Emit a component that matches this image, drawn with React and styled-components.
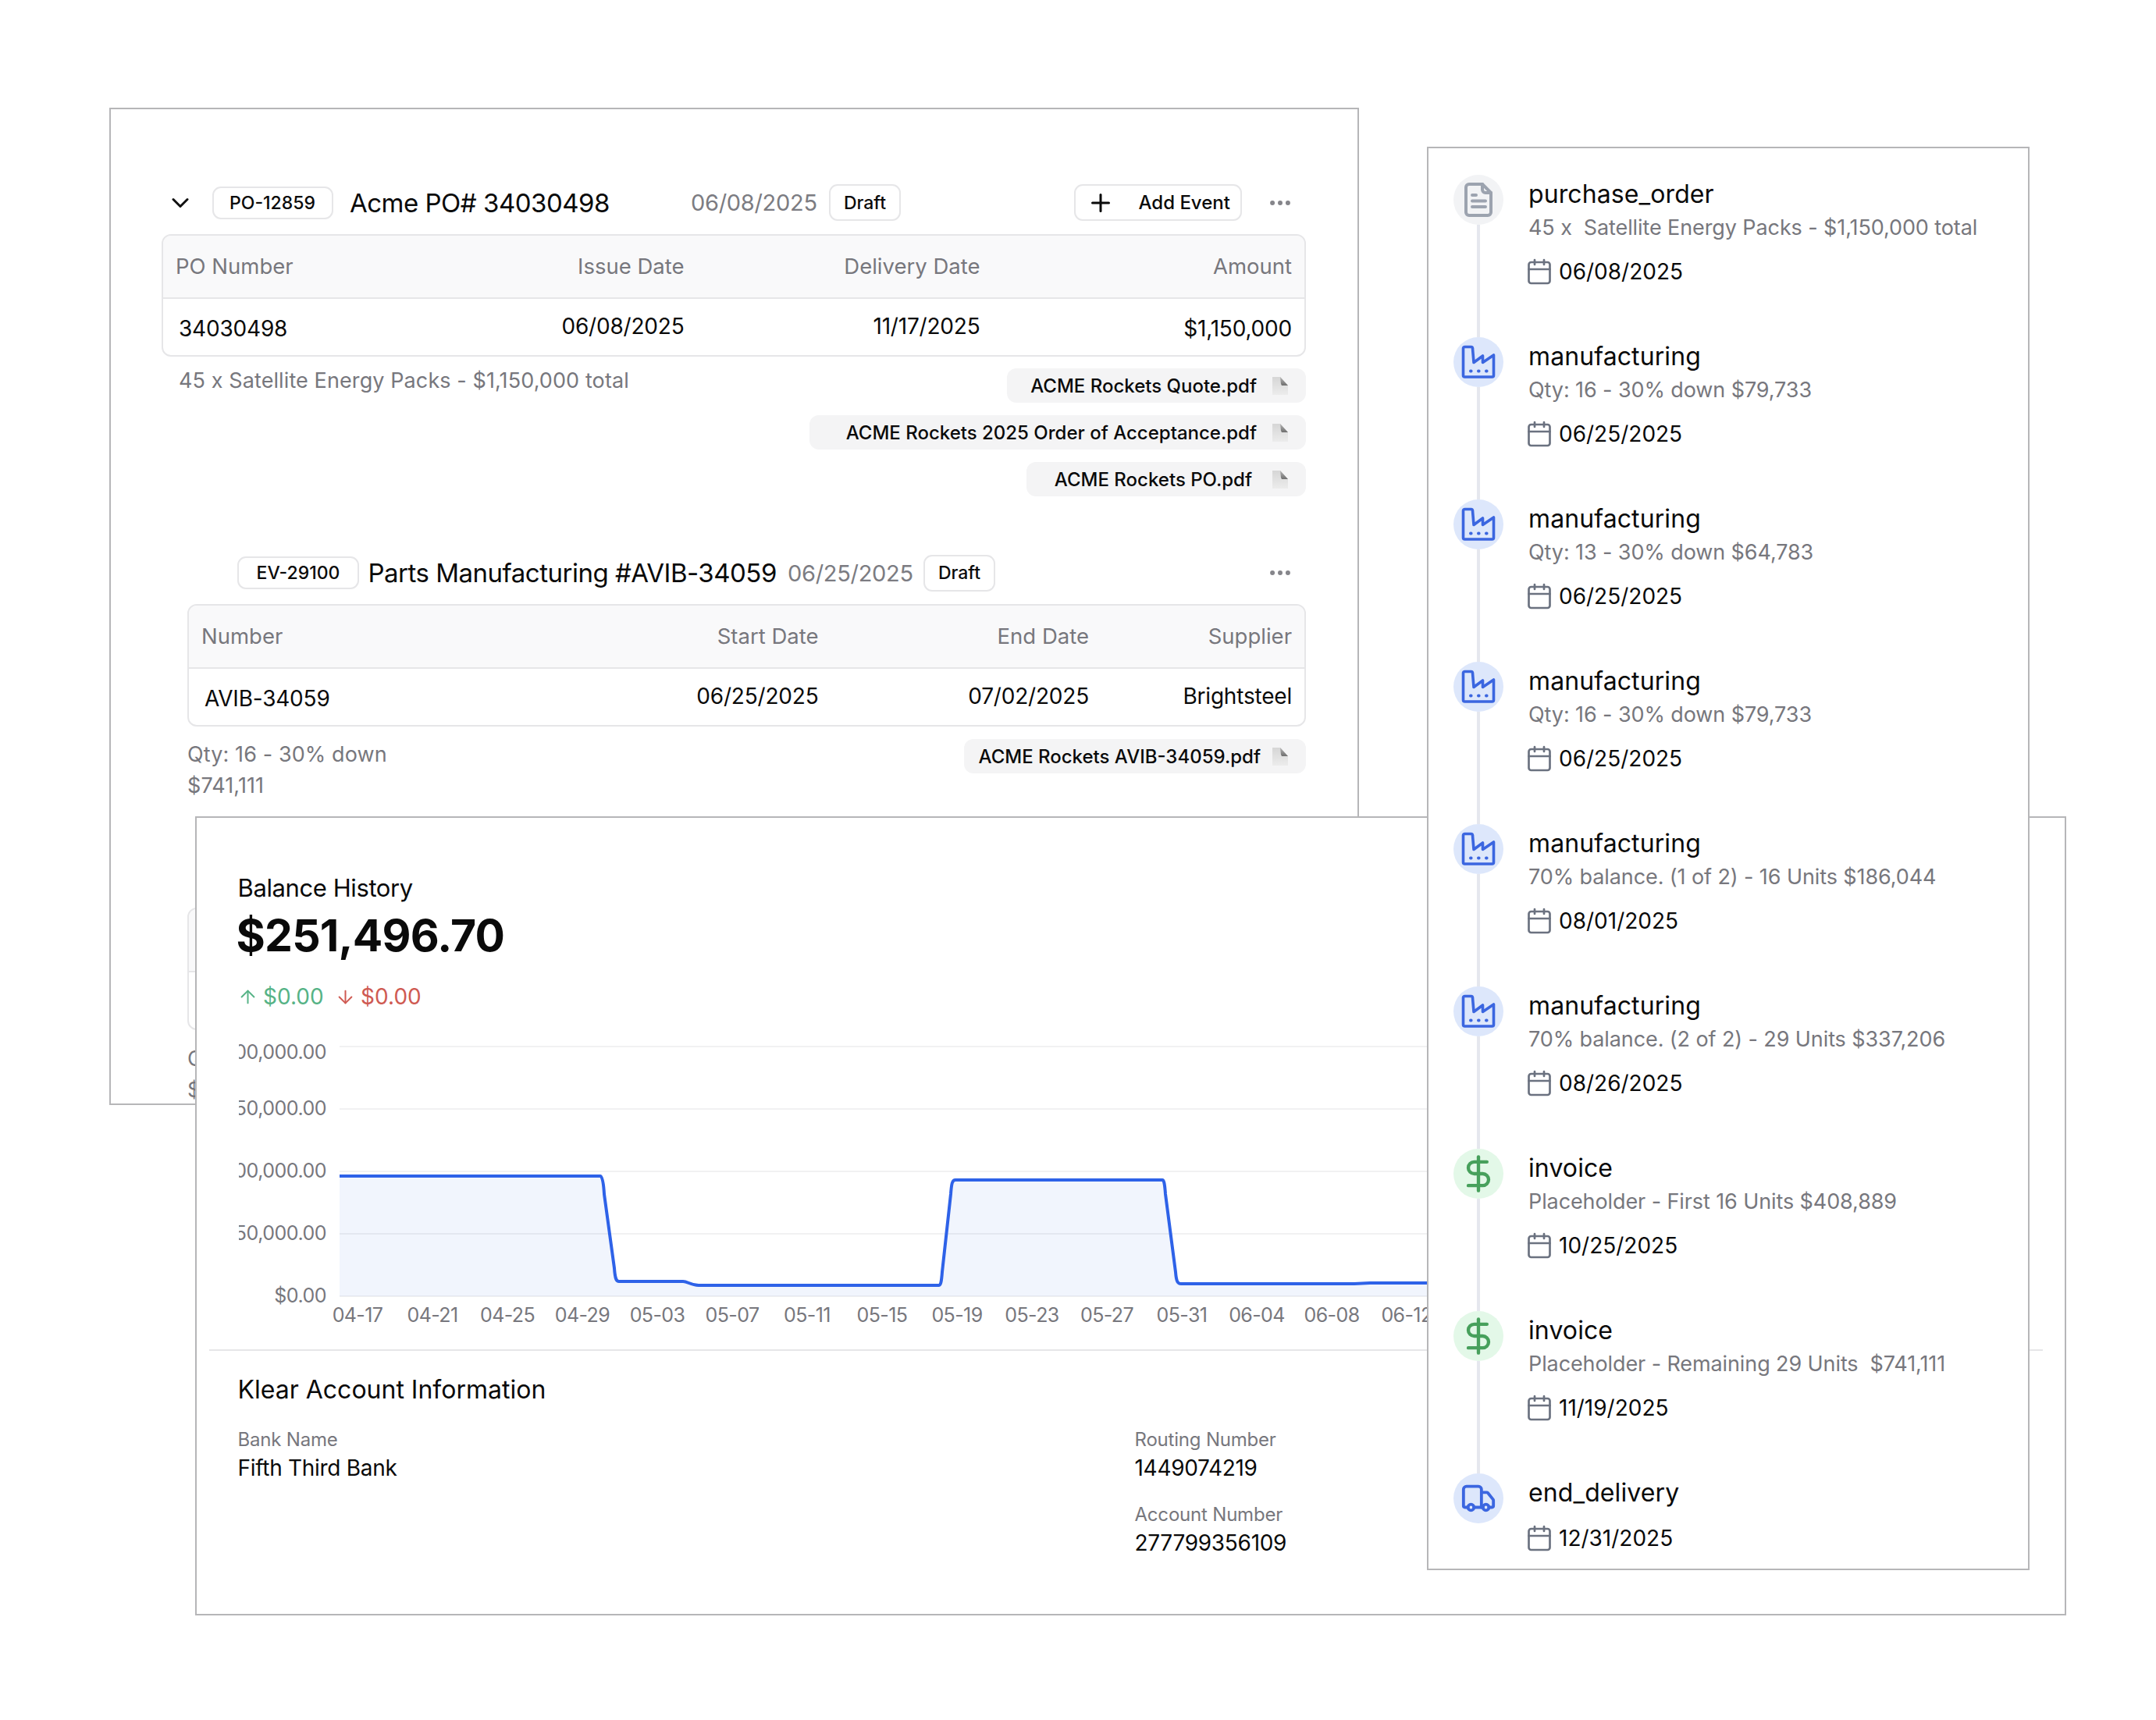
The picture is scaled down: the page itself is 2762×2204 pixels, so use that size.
import React from "react";
import styled, { createGlobalStyle } from "styled-components";
import { ChevronDown, Plus, Ellipsis, DollarSign, Truck, Calendar, ArrowUp, ArrowDown } from "lucide-react";

const GlobalStyle = createGlobalStyle`
  html, body {
    margin: 0;
    background: #ffffff;
    color: #0a0a0a;
    font-family: Inter, "Noto Sans", sans-serif;
  }
  * { box-sizing: border-box; }
`;

const Canvas = styled.div`
  position: relative;
  width: 2762px;
  height: 2204px;
  overflow: hidden;
  background: #ffffff;
`;

const Window = styled.section`
  position: absolute;
  left: ${p => p.$left}px;
  top: ${p => p.$top}px;
  width: ${p => p.$width}px;
  height: ${p => p.$height}px;
  background: #ffffff;
  border: 2px solid #b6b6b8;
  overflow: hidden;
`;

const OrderWindow = styled(Window)`
  padding: 96px 66px 0 65px;
`;

const HeaderRow = styled.div`
  display: flex;
  align-items: center;
  height: 47px;
  margin-top: ${p => p.$top || 0}px;
  padding-left: ${p => p.$indent || 0}px;
`;

const Toggle = styled.span`
  display: flex;
  width: 36px;
  margin: 0 23px 0 5.5px;
  color: #111;
`;

const Badge = styled.span`
  display: flex;
  align-items: center;
  justify-content: center;
  width: ${p => p.$width}px;
  height: ${p => p.$height || 42}px;
  border: 2px solid #e6e6e8;
  border-radius: 11px;
  font-size: 23px;
  font-weight: 500;
`;

const HeaderTitle = styled.h2`
  width: ${p => p.$width}px;
  margin: 0 0 0 ${p => p.$gap}px;
  font-size: 33px;
  font-weight: 400;
  letter-spacing: -0.5px;
  white-space: nowrap;
`;

const HeaderDate = styled.span`
  width: ${p => p.$width}px;
  margin-right: 17px;
  color: #7c7c82;
  font-size: 29px;
  letter-spacing: -0.3px;
  white-space: nowrap;
`;

const AddButton = styled.button`
  display: flex;
  align-items: center;
  gap: 31px;
  width: 215px;
  height: 47px;
  margin-left: auto;
  padding: 0 0 0 13.5px;
  background: #ffffff;
  border: 2px solid #e6e6e8;
  border-radius: 11px;
  font-family: inherit;
  font-size: 24px;
  font-weight: 500;
  color: #0a0a0a;
`;

const More = styled.span`
  display: flex;
  margin-right: 16px;
  margin-left: ${p => p.$auto ? "auto" : "32px"};
  color: #85858a;
`;

const Table = styled.div`
  margin: ${p => p.$top}px 0 0 ${p => p.$indent || 0}px;
  border: 2px solid #e6e6e8;
  border-radius: 12px;
  overflow: hidden;
`;

const TableHead = styled.div`
  display: grid;
  grid-template-columns: ${p => p.$cols};
  align-items: center;
  height: 81px;
  padding: 0 16px 2px;
  background: #f9f9fa;
  border-bottom: 2px solid #e6e6e8;
  color: #77777d;
  font-size: 27.5px;
`;

const TableRow = styled.div`
  display: grid;
  grid-template-columns: ${p => p.$cols};
  align-items: center;
  height: 72px;
  padding: 0 16px;
  font-size: 28px;
  letter-spacing: -0.2px;
`;

const Cell = styled.div`
  text-align: ${p => p.$first ? "left" : "right"};
  white-space: nowrap;
`;

const ValueCell = styled(Cell)`
  padding-top: ${p => p.$low ? 4 : 0}px;
  padding-bottom: ${p => p.$low ? 0 : 3}px;
  padding-left: ${p => p.$first ? 4 : 0}px;
`;

const FootRow = styled.div`
  display: flex;
  justify-content: space-between;
  align-items: flex-start;
  margin: ${p => p.$top}px 0 0 ${p => p.$indent || 0}px;
`;

const Note = styled.div`
  padding-left: ${p => p.$indent || 0}px;
  color: #77777d;
  font-size: 27px;
  line-height: 40px;
  letter-spacing: 0.1px;
  white-space: nowrap;
`;

const Chips = styled.div`
  display: flex;
  flex-direction: column;
  align-items: flex-end;
  gap: 16px;
  margin-top: ${p => p.$top || 0}px;
`;

const Chip = styled.div`
  display: flex;
  align-items: center;
  justify-content: flex-end;
  gap: ${p => p.$gap}px;
  width: ${p => p.$width}px;
  height: 44px;
  padding-right: 23px;
  background: #f4f4f5;
  border-radius: 12px;
  font-size: 24px;
  font-weight: 500;
  white-space: nowrap;
`;

const BalanceWindow = styled(Window)`
  padding: 71px 28px 0 52.5px;
`;

const BalanceLabel = styled.div`
  font-size: 31px;
  line-height: 38px;
  letter-spacing: -0.4px;
`;

const BalanceAmount = styled.div`
  margin: 9px 0 0 -2px;
  font-size: 57px;
  line-height: 66px;
  font-weight: 700;
  letter-spacing: -0.8px;
`;

const ChangeRow = styled.div`
  display: flex;
  align-items: center;
  height: 36px;
  margin: 27px 0 0 -1px;
  font-size: 28px;
`;

const Change = styled.span`
  display: flex;
  align-items: center;
  gap: 6.5px;
  margin-right: 14px;
  color: ${p => p.$color};
`;

const ChartRow = styled.div`
  display: flex;
  gap: 17px;
  margin: 45px 0 0 1.5px;
`;

const YAxis = styled.div`
  display: flex;
  flex: none;
  flex-direction: column;
  width: 112px;
  margin: -40px 0 -38px;
  overflow: hidden;
`;

const YLabel = styled.div`
  display: flex;
  justify-content: flex-end;
  align-items: ${p => p.$low ? "flex-end" : "center"};
  height: 80px;
  padding-bottom: ${p => p.$low ? 17 : 0}px;
  color: #77777d;
  font-size: 25px;
  letter-spacing: -0.5px;
  white-space: nowrap;
`;

const XAxis = styled.div`
  display: flex;
  margin: 8px 0 0 105.5px;
`;

const XLabel = styled.div`
  flex: none;
  width: 96px;
  color: #77777d;
  font-size: 25px;
  line-height: 30px;
  letter-spacing: -0.6px;
  text-align: center;
`;

const Divider = styled.div`
  height: 2px;
  margin: 29px 0 0 -36.5px;
  background: #e6e6e8;
`;

const InfoTitle = styled.h3`
  margin: 30px 0 0;
  font-size: 32px;
  line-height: 40px;
  font-weight: 400;
`;

const InfoGrid = styled.div`
  display: grid;
  grid-template-columns: 1149px 1fr;
  margin-top: 29px;
`;

const InfoLabel = styled.div`
  margin-top: ${p => p.$top || 0}px;
  color: #77777d;
  font-size: 24px;
  line-height: 30px;
  letter-spacing: -0.2px;
`;

const InfoValue = styled.div`
  margin-top: 3px;
  font-size: 28px;
  line-height: 36px;
  letter-spacing: -0.3px;
`;

const TimelineWindow = styled(Window)`
  padding: 34px 0 0 32px;
`;

const TimelineItem = styled.div`
  display: flex;
  gap: 32px;
  height: ${p => p.$last ? 120 : 208}px;
`;

const Rail = styled.div`
  display: flex;
  flex: none;
  flex-direction: column;
  align-items: center;
  width: 64px;
`;

const Dot = styled.div`
  display: flex;
  flex: none;
  align-items: center;
  justify-content: center;
  width: 64px;
  height: 64px;
  border-radius: 50%;
  background: ${p => p.$bg};
  color: ${p => p.$color};
`;

const RailLine = styled.div`
  flex: 1;
  width: 4px;
  background: #e5e7ee;
`;

const ItemBody = styled.div`
  padding-top: 5px;
`;

const ItemTitle = styled.div`
  font-size: 32px;
  line-height: 40px;
  letter-spacing: 0.1px;
`;

const ItemNote = styled.div`
  margin-top: 5px;
  color: #77777d;
  font-size: 27px;
  line-height: 36px;
  letter-spacing: -0.1px;
  white-space: pre;
`;

const ItemDate = styled.div`
  display: flex;
  align-items: center;
  gap: 7px;
  height: 36px;
  margin: ${p => p.$top}px 0 0 -4px;
  font-size: 28px;
  svg { flex: none; color: #6b7280; }
`;

const FileIcon = () => (
  <svg width="20" height="23" viewBox="0 0 20 23">
    <defs>
      <linearGradient id="fileBody" x1="0" y1="0" x2="0" y2="1">
        <stop offset="0" stopColor="#d6d6d6" />
        <stop offset="1" stopColor="#ececec" />
      </linearGradient>
      <linearGradient id="fileFold" x1="0" y1="0" x2="0" y2="1">
        <stop offset="0" stopColor="#b5b5b5" />
        <stop offset="1" stopColor="#6f6f6f" />
      </linearGradient>
    </defs>
    <path d="M0 0H10L20 11V23H0Z" fill="url(#fileBody)" />
    <path d="M10 0L20 11H12L11 9Z" fill="url(#fileFold)" />
  </svg>
);

const DocIcon = () => (
  <svg width="36" height="44" viewBox="0 0 36 44" fill="none" stroke="currentColor" strokeWidth="4" strokeLinecap="round" strokeLinejoin="round">
    <path d="M6 2H23L34 13V38a4 4 0 0 1-4 4H6a4 4 0 0 1-4-4V6a4 4 0 0 1 4-4Z" />
    <path d="M23 2V9a4 4 0 0 0 4 4H34" />
    <path d="M10 16H15M10 23.5H27M10 31H27" />
  </svg>
);

const FactoryIcon = () => (
  <svg width="44" height="44" viewBox="0 0 44 44" fill="none" stroke="currentColor" strokeWidth="3.6" strokeLinecap="round" strokeLinejoin="round">
    <path d="M2.5 39V4.5a2 2 0 0 1 2-2h8a2 2 0 0 1 2 2L16 22.5L27.5 14V22.5L41.5 13V39a2 2 0 0 1-2 2H4.5a2 2 0 0 1-2-2Z" />
    <path d="M12 33.5h.6M22 33.5h.6M32 33.5h.6" strokeWidth="4" />
  </svg>
);

const LINE = "M0 167H334C336 167 338 172 339 190L352 285C353 300 355 302 358 302H440C446 302 450 307 460 307H768C770 307 771 303 772 290L783 190C784 176 785 172 789 172H1054C1056 172 1057 176 1058 190L1071 290C1072 303 1074 305 1078 305H1300L1320 304H2160";

const BalanceChart = () => (
  <svg width="2160" height="322" viewBox="0 0 2160 322">
    {[1, 81, 161, 241, 321].map(y => (
      <line key={y} x1="0" x2="2160" y1={y} y2={y} stroke="#f1f1f2" strokeWidth="2" />
    ))}
    <path d={`${LINE}V321H0Z`} fill="#2e62e8" fillOpacity="0.065" />
    <path d={LINE} fill="none" stroke="#2e62e8" strokeWidth="4" />
  </svg>
);

const FILES_ONE = [
  { name: "ACME Rockets Quote.pdf", width: 383, gap: 20 },
  { name: "ACME Rockets 2025 Order of Acceptance.pdf", width: 636, gap: 20 },
  { name: "ACME Rockets PO.pdf", width: 358, gap: 26 }
];

const PO_COLS = "400px 251.5px 379px 1fr";
const EV_COLS = "500px 290.5px 346.5px 1fr";

const EVENT_HEAD = ["Number", "Start Date", "End Date", "Supplier"];
const EVENT_ROW = ["AVIB-34059", "06/25/2025", "07/02/2025", "Brightsteel"];

const EventSection = ({ top, footTop }) => (
  <>
    <HeaderRow $top={top} $indent={97}>
      <Badge $width={156}>EV-29100</Badge>
      <HeaderTitle $width={537.5} $gap={11.5}>Parts Manufacturing #AVIB-34059</HeaderTitle>
      <HeaderDate $width={157}>06/25/2025</HeaderDate>
      <Badge $width={92} $height={47}>Draft</Badge>
      <More $auto><Ellipsis size={34} strokeWidth={2.2} /></More>
    </HeaderRow>
    <Table $top={16.5} $indent={33}>
      <TableHead $cols={EV_COLS}>
        {EVENT_HEAD.map((h, i) => <Cell key={h} $first={i === 0}>{h}</Cell>)}
      </TableHead>
      <TableRow $cols={EV_COLS}>
        {EVENT_ROW.map((v, i) => <ValueCell key={v} $first={i === 0} $low={i === 0}>{v}</ValueCell>)}
      </TableRow>
    </Table>
    <FootRow $top={footTop} $indent={33}>
      <Note>Qty: 16 - 30% down<br />$741,111</Note>
      <Chips>
        <Chip $width={438} $gap={15}>ACME Rockets AVIB-34059.pdf<FileIcon /></Chip>
      </Chips>
    </FootRow>
  </>
);

const OrderPanel = () => (
  <OrderWindow $left={140} $top={138} $width={1601} $height={1278}>
    <HeaderRow>
      <Toggle><ChevronDown size={36} strokeWidth={2} /></Toggle>
      <Badge $width={155}>PO-12859</Badge>
      <HeaderTitle $width={437} $gap={21.5}>Acme PO# 34030498</HeaderTitle>
      <HeaderDate $width={160}>06/08/2025</HeaderDate>
      <Badge $width={92} $height={47}>Draft</Badge>
      <AddButton><Plus size={36} strokeWidth={2} />Add Event</AddButton>
      <More><Ellipsis size={34} strokeWidth={2.2} /></More>
    </HeaderRow>
    <Table $top={17}>
      <TableHead $cols={PO_COLS}>
        <Cell $first>PO Number</Cell>
        <Cell>Issue Date</Cell>
        <Cell>Delivery Date</Cell>
        <Cell>Amount</Cell>
      </TableHead>
      <TableRow $cols={PO_COLS}>
        <ValueCell $first $low>34030498</ValueCell>
        <ValueCell>06/08/2025</ValueCell>
        <ValueCell>11/17/2025</ValueCell>
        <ValueCell $low>$1,150,000</ValueCell>
      </TableRow>
    </Table>
    <FootRow $top={11}>
      <Note $indent={22}>45 x Satellite Energy Packs - $1,150,000 total</Note>
      <Chips $top={4}>
        {FILES_ONE.map(f => (
          <Chip key={f.name} $width={f.width} $gap={f.gap}>{f.name}<FileIcon /></Chip>
        ))}
      </Chips>
    </FootRow>
    <EventSection top={74.5} footTop={16} />
    <EventSection top={72.5} footTop={17} />
  </OrderWindow>
);

const X_TICKS = ["04-17", "04-21", "04-25", "04-29", "05-03", "05-07", "05-11", "05-15", "05-19", "05-23", "05-27", "05-31", "06-04", "06-08", "06-12", "06-16"];
const Y_TICKS = ["$200,000.00", "$150,000.00", "$100,000.00", "$50,000.00", "$0.00"];

const BalancePanel = () => (
  <BalanceWindow $left={250} $top={1046} $width={2397} $height={1024}>
    <BalanceLabel>Balance History</BalanceLabel>
    <BalanceAmount>$251,496.70</BalanceAmount>
    <ChangeRow>
      <Change $color="#56b386"><ArrowUp size={27} strokeWidth={1.75} />$0.00</Change>
      <Change $color="#cf5a52"><ArrowDown size={27} strokeWidth={1.75} />$0.00</Change>
    </ChangeRow>
    <ChartRow>
      <YAxis>
        {Y_TICKS.map((t, i) => <YLabel key={t} $low={i === 0}>{t}</YLabel>)}
      </YAxis>
      <BalanceChart />
    </ChartRow>
    <XAxis>
      {X_TICKS.map(t => <XLabel key={t}>{t}</XLabel>)}
    </XAxis>
    <Divider />
    <InfoTitle>Klear Account Information</InfoTitle>
    <InfoGrid>
      <div>
        <InfoLabel>Bank Name</InfoLabel>
        <InfoValue>Fifth Third Bank</InfoValue>
      </div>
      <div>
        <InfoLabel>Routing Number</InfoLabel>
        <InfoValue>1449074219</InfoValue>
        <InfoLabel $top={27}>Account Number</InfoLabel>
        <InfoValue>277799356109</InfoValue>
      </div>
    </InfoGrid>
  </BalanceWindow>
);

const BLUE = { bg: "#dde7fb", color: "#3b66e0", icon: <FactoryIcon /> };
const GREEN = { bg: "#e3f8e8", color: "#47a05c", icon: <DollarSign size={52} strokeWidth={2} /> };

const EVENTS = [
  { title: "purchase_order", note: "45 x  Satellite Energy Packs - $1,150,000 total", date: "06/08/2025", bg: "#f2f3f5", color: "#9ca3af", icon: <DocIcon /> },
  { title: "manufacturing", note: "Qty: 16 - 30% down $79,733", date: "06/25/2025", ...BLUE },
  { title: "manufacturing", note: "Qty: 13 - 30% down $64,783", date: "06/25/2025", ...BLUE },
  { title: "manufacturing", note: "Qty: 16 - 30% down $79,733", date: "06/25/2025", ...BLUE },
  { title: "manufacturing", note: "70% balance. (1 of 2) - 16 Units $186,044", date: "08/01/2025", ...BLUE },
  { title: "manufacturing", note: "70% balance. (2 of 2) - 29 Units $337,206", date: "08/26/2025", ...BLUE },
  { title: "invoice", note: "Placeholder - First 16 Units $408,889", date: "10/25/2025", ...GREEN },
  { title: "invoice", note: "Placeholder - Remaining 29 Units  $741,111", date: "11/19/2025", ...GREEN },
  { title: "end_delivery", date: "12/31/2025", bg: "#dde7fb", color: "#3b66e0", icon: <Truck size={46} strokeWidth={2} /> }
];

const TimelinePanel = () => (
  <TimelineWindow $left={1828} $top={188} $width={772} $height={1824}>
    {EVENTS.map((e, i) => {
      const last = i === EVENTS.length - 1;
      return (
        <TimelineItem key={i} $last={last}>
          <Rail>
            <Dot $bg={e.bg} $color={e.color}>{e.icon}</Dot>
            {!last && <RailLine />}
          </Rail>
          <ItemBody>
            <ItemTitle>{e.title}</ItemTitle>
            {e.note && <ItemNote>{e.note}</ItemNote>}
            <ItemDate $top={e.note ? 20 : 20}>
              <Calendar size={36} strokeWidth={1.8} />
              {e.date}
            </ItemDate>
          </ItemBody>
        </TimelineItem>
      );
    })}
  </TimelineWindow>
);

export default function App() {
  return (
    <Canvas>
      <GlobalStyle />
      <OrderPanel />
      <BalancePanel />
      <TimelinePanel />
    </Canvas>
  );
}
